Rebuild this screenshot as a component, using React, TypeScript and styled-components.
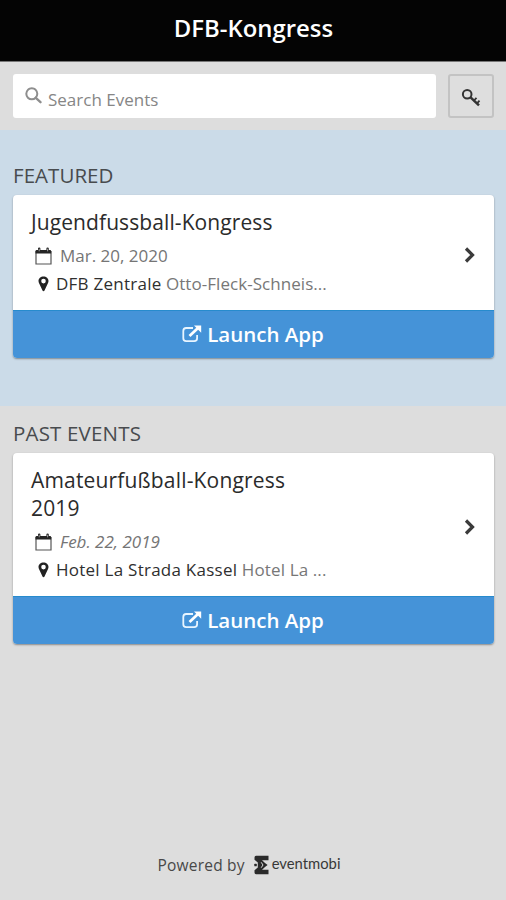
import React from "react";
import styled, { createGlobalStyle } from "styled-components";

const GlobalStyle = createGlobalStyle`
  *, *::before, *::after { box-sizing: border-box; }
  body { margin: 0; background: #ddd; font-family: "Open Sans", "Noto Sans", sans-serif; }
  button, input { font-family: inherit; }
`;

const Page = styled.div`
  display: flex;
  flex-direction: column;
  width: 100%;
  height: 900px;
  overflow: hidden;
  background: #ddd;
`;

const Header = styled.header`
  display: flex;
  flex: none;
  justify-content: center;
  height: 62px;
  padding: 11px 0 0 1px;
  background: #040404;
  border-bottom: 1px solid #777;
`;

const HeaderTitle = styled.h1`
  margin: 0;
  color: #fff;
  font-size: 23.9px;
  font-weight: 600;
  line-height: 34px;
`;

const SearchBar = styled.div`
  display: flex;
  flex: none;
  gap: 12px;
  height: 68px;
  padding: 12px 12px 12px 13px;
`;

const SearchField = styled.label`
  display: flex;
  flex: 1;
  min-width: 0;
  background: #fff;
  border-radius: 3px;
  padding-left: 12px;
  svg { flex: none; margin-top: 13px; }
`;

const SearchInput = styled.input`
  flex: 1;
  min-width: 0;
  padding: 6px 0 0 6px;
  border: 0;
  outline: 0;
  background: none;
  font-size: 17px;
  &::placeholder { color: #868686; opacity: 1; }
`;

const KeyButton = styled.button`
  display: flex;
  align-items: center;
  justify-content: center;
  width: 46px;
  padding: 3px 0 0;
  background: #dedede;
  border: 2px solid #c3c3c3;
  border-radius: 3px;
`;

const Section = styled.section<{ $featured?: boolean }>`
  flex: none;
  height: ${(p) => (p.$featured ? 276 : 260)}px;
  padding: ${(p) => (p.$featured ? 31 : 13)}px 12px 0 13px;
  background: ${(p) => (p.$featured ? "#cbdbe8" : "#ddd")};
`;

const SectionTitle = styled.h2<{ $spacing: number }>`
  height: 34px;
  margin: 0;
  color: #484b4e;
  font-size: 20.5px;
  font-weight: 400;
  line-height: 28px;
  letter-spacing: ${(p) => p.$spacing}px;
`;

const Card = styled.article`
  overflow: hidden;
  background: #fff;
  border-radius: 4px;
  box-shadow: 0 1px 2px rgba(0, 0, 0, 0.38);
`;

const CardBody = styled.div`
  display: flex;
  align-items: center;
  justify-content: space-between;
  padding: 13px 18px 12px;
  > svg { margin-top: 3px; }
`;

const Details = styled.div`
  width: 300px;
`;

const EventName = styled.h3<{ $spacing: number }>`
  width: 280px;
  margin: 0 0 6px;
  color: #2b2b2b;
  font-size: 21px;
  font-weight: 400;
  line-height: 28px;
  letter-spacing: ${(p) => p.$spacing}px;
`;

const Line = styled.div`
  display: flex;
  align-items: center;
  height: 28px;
  padding: 0 0 2px 4px;
  svg { flex: none; margin-top: 2px; }
`;

const DateText = styled.span<{ $italic?: boolean }>`
  margin-left: 8px;
  color: #757575;
  font-size: 17px;
  font-style: ${(p) => (p.$italic ? "italic" : "normal")};
`;

const Place = styled.span<{ $spacing: number }>`
  margin-left: 4px;
  color: #777;
  font-size: 17px;
  white-space: nowrap;
  letter-spacing: ${(p) => p.$spacing}px;
`;

const Venue = styled.span`
  color: #2f2f2f;
  letter-spacing: 0.25px;
`;

const LaunchButton = styled.button`
  display: flex;
  align-items: center;
  justify-content: center;
  gap: 5px;
  width: 100%;
  height: 48px;
  padding: 0 1px 2px 0;
  border: 0;
  border-top: 1px solid #278bcd;
  background: #4593d8;
  color: #fff;
  font-size: 20.5px;
  font-weight: 600;
`;

const Footer = styled.footer`
  display: flex;
  flex: none;
  align-items: center;
  justify-content: center;
  gap: 9px;
  height: 28px;
  margin-top: auto;
  margin-bottom: 21px;
  padding-right: 8px;
  color: #484848;
`;

const PoweredBy = styled.span`
  font-size: 15.5px;
  letter-spacing: 0.2px;
`;

const Brand = styled.span`
  display: flex;
  align-items: center;
  gap: 3px;
`;

const BrandName = styled.span`
  margin-top: -4px;
  color: #383838;
  font-family: Lato, sans-serif;
  font-size: 14.8px;
  line-height: 20px;
`;

const SearchIcon = () => (
  <svg width="17" height="17" viewBox="0 0 17 17" fill="none" stroke="#8e8e8e">
    <circle cx="6.8" cy="6.8" r="5.5" strokeWidth="2" />
    <path d="M10.8 10.8 15.5 15.2" strokeWidth="2.3" strokeLinecap="round" />
  </svg>
);

const KeyIcon = () => (
  <svg width="20" height="20" viewBox="0 0 20 20" fill="none" stroke="#333">
    <circle cx="6.2" cy="6.3" r="4.3" strokeWidth="2" />
    <path d="M9.3 9.2 18 17.4" strokeWidth="2.5" />
    <path d="m13 12.5 2.5-2.7M16 15.4l2.5-2.7" strokeWidth="1.8" />
  </svg>
);

const CalendarIcon = () => (
  <svg width="17" height="18" viewBox="0 0 17 18">
    <path d="M1 4.5h15V17H1z" fill="none" stroke="#555" strokeWidth="1.2" />
    <path d="M.5 6.500V4.200Q.5 3 1.700 3H3V1.500Q3 .5 4.200.5t1.200 1V3h6V1.500q0-1 1.200-1t1.200 1V3h1.200q1.200 0 1.200 1.200V6.500z" fill="#252525" />
    <path d="M4.200 1.800v2.500M12.600 1.800v2.500" stroke="#bbb" strokeWidth=".8" />
  </svg>
);

const PinIcon = () => (
  <svg width="17" height="16" viewBox="0 0 17 16">
    <path
      d="M8.500.5C5.700.5 3.500 2.500 3.500 5c0 1 .3 1.800.7 2.600l3.300 7q.3.7 1 .7t1-.7l3.300-7c.4-.8.7-1.600.7-2.600 0-2.500-2.200-4.500-5-4.500zm0 2.300a2.300 2.300 0 1 1 0 4.600 2.300 2.300 0 0 1 0-4.600z"
      fill="#222"
      fillRule="evenodd"
    />
  </svg>
);

const ChevronIcon = () => (
  <svg width="13" height="18" viewBox="0 0 13 18" fill="none" stroke="#3b3b3b" strokeWidth="3.2">
    <path d="m3 2.500 6.500 6.500L3 15.500" />
  </svg>
);

const LaunchIcon = () => (
  <svg width="20" height="18" viewBox="0 0 20 18">
    <path
      d="M11 3H4.200Q1.300 3 1.300 5.900v7.300q0 2.900 2.900 2.900h8q2.900 0 2.900-2.900V10"
      fill="none"
      stroke="#e8f5ff"
      strokeWidth="1.800"
    />
    <path d="m7.500 11 8.500-8" stroke="#fff" strokeWidth="2.800" />
    <path d="M12 .5h7.200v7.200z" fill="#fff" />
  </svg>
);

const BrandMark = () => (
  <svg width="15" height="20" viewBox="0 0 15 20" fill="#2a2a2a">
    <path d="M2 .8h12.500v4.400H8l3 2.800 2.600 2-2.600 2-3 2.800h6.500v4.400H2Q.5 19.200.5 17.500v-2.200L3.800 12.500V7.500L.5 4.700V2.500Q.5.8 2 .8z" />
    <path d="M7.200 7.300 9 10l-1.800 2.700" fill="none" stroke="#ddd" strokeWidth="1" />
    <rect x=".3" y="8.700" width="2.500" height="2.600" rx=".6" />
  </svg>
);

interface EventInfo {
  name: React.ReactNode;
  nameSpacing: number;
  date: string;
  past?: boolean;
  venue: string;
  address: string;
  placeSpacing: number;
}

const EventCard = ({ name, nameSpacing, date, past, venue, address, placeSpacing }: EventInfo) => (
  <Card>
    <CardBody>
      <Details>
        <EventName $spacing={nameSpacing}>{name}</EventName>
        <Line>
          <CalendarIcon />
          <DateText $italic={past}>{date}</DateText>
        </Line>
        <Line>
          <PinIcon />
          <Place $spacing={placeSpacing}>
            <Venue>{venue}</Venue> {address}
          </Place>
        </Line>
      </Details>
      <ChevronIcon />
    </CardBody>
    <LaunchButton>
      <LaunchIcon />
      Launch App
    </LaunchButton>
  </Card>
);

export default function App() {
  return (
    <Page>
      <GlobalStyle />
      <Header>
        <HeaderTitle>DFB-Kongress</HeaderTitle>
      </Header>
      <SearchBar>
        <SearchField>
          <SearchIcon />
          <SearchInput placeholder="Search Events" />
        </SearchField>
        <KeyButton aria-label="Enter code">
          <KeyIcon />
        </KeyButton>
      </SearchBar>
      <Section $featured>
        <SectionTitle $spacing={0.05}>FEATURED</SectionTitle>
        <EventCard
          name="Jugendfussball-Kongress"
          nameSpacing={0.09}
          date="Mar. 20, 2020"
          venue="DFB Zentrale"
          address="Otto-Fleck-Schneis..."
          placeSpacing={0.05}
        />
      </Section>
      <Section>
        <SectionTitle $spacing={0.18}>PAST EVENTS</SectionTitle>
        <EventCard
          name="Amateurfußball-Kongress 2019"
          nameSpacing={0.17}
          date="Feb. 22, 2019"
          past
          venue="Hotel La Strada Kassel"
          address="Hotel La ..."
          placeSpacing={0.13}
        />
      </Section>
      <Footer>
        <PoweredBy>Powered by</PoweredBy>
        <Brand>
          <BrandMark />
          <BrandName>eventmobi</BrandName>
        </Brand>
      </Footer>
    </Page>
  );
}
